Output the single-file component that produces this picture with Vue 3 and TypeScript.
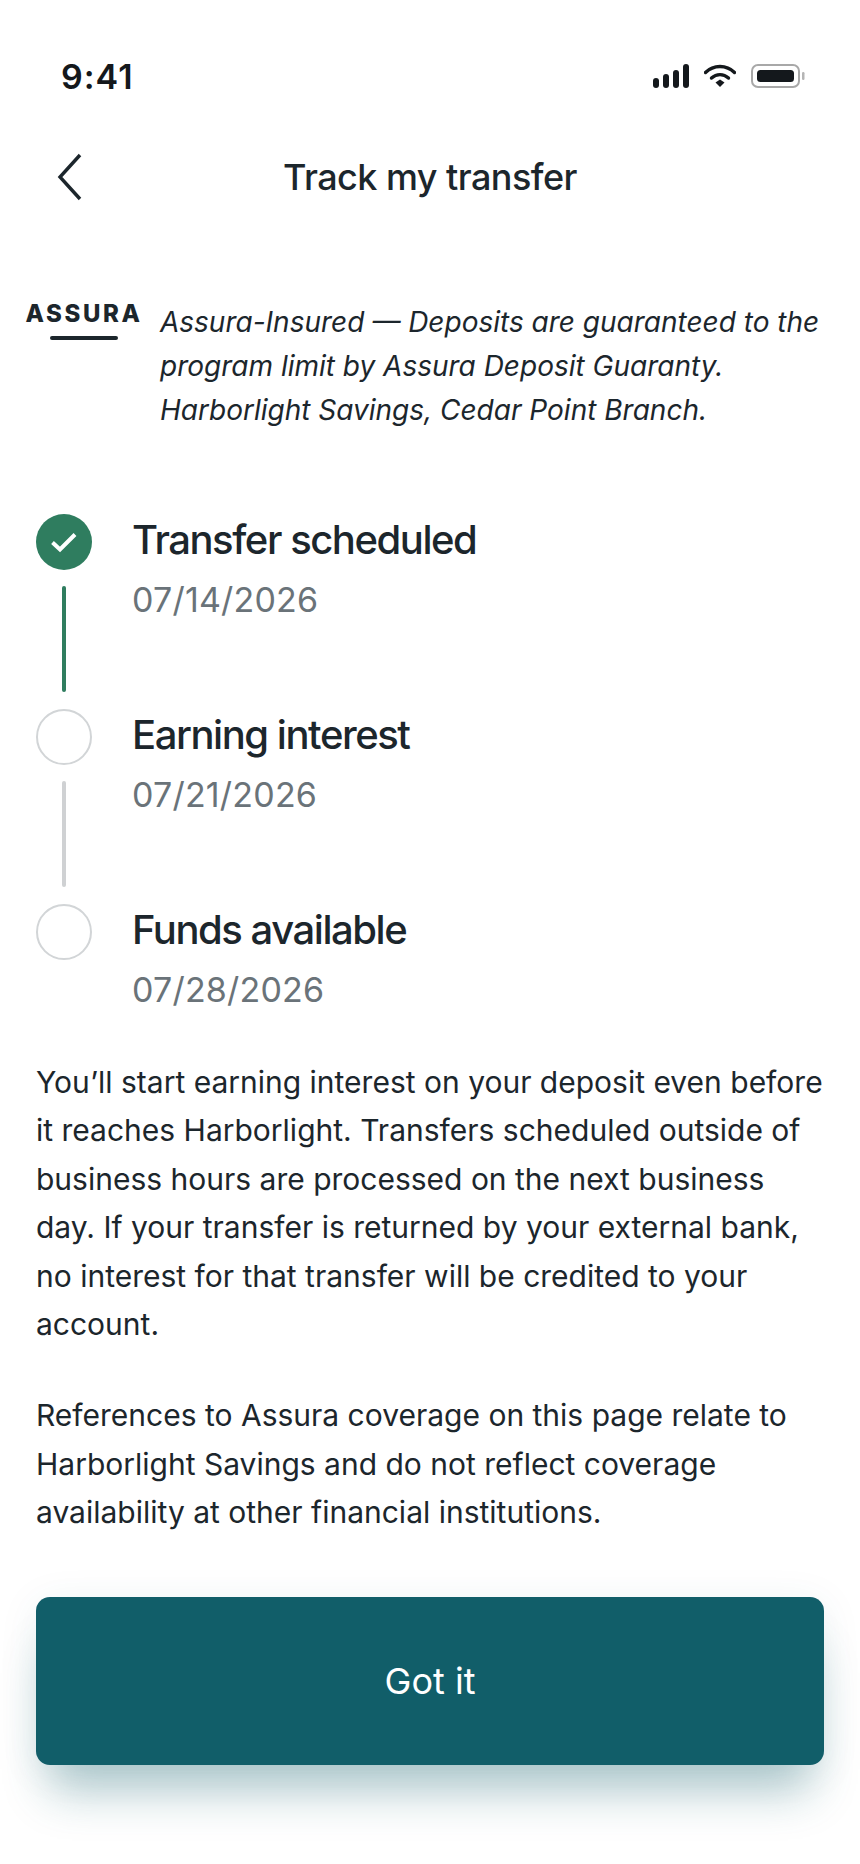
<template>
  <div class="screen">
    <div class="status-bar">
      <span class="time">9:41</span>
      <div class="status-icons">
        <svg width="36" height="24" viewBox="0 0 36 24">
          <rect x="0" y="14" width="6" height="10" rx="3" fill="#14181c" />
          <rect x="10" y="10" width="6" height="14" rx="3" fill="#14181c" />
          <rect x="20" y="6" width="6" height="18" rx="3" fill="#14181c" />
          <rect x="30" y="0" width="6" height="24" rx="3" fill="#14181c" />
        </svg>
        <svg width="32" height="24" viewBox="0 0 32 24" fill="none">
          <path d="M1.5 8.5C9.5 0.5 22.5 0.5 30.5 8.5" stroke="#14181c" stroke-width="3.4" stroke-linecap="round" />
          <path d="M7.5 14C12.5 9.5 19.5 9.5 24.5 14" stroke="#14181c" stroke-width="3.4" stroke-linecap="round" />
          <path d="M11.5 18.5L16 15.5L20.5 18.5L16 23Z" fill="#14181c" />
        </svg>
        <svg width="54" height="24" viewBox="0 0 54 24" fill="none">
          <rect x="1" y="1" width="47" height="22" rx="6" stroke="#a8a8a8" stroke-width="2" />
          <rect x="6" y="6" width="37" height="12" rx="3.5" fill="#14181c" />
          <rect x="51" y="8" width="2.5" height="8" rx="1.2" fill="#b5b5b5" />
        </svg>
      </div>
    </div>

    <header class="nav">
      <svg class="back" width="28" height="48" viewBox="0 0 28 48" fill="none">
        <path d="M24 2L4 24L24 46" stroke="#1c262c" stroke-width="3.4" />
      </svg>
      <h1>Track my transfer</h1>
    </header>

    <section class="insured">
      <div class="logo">
        <span class="logo-name">ASSURA</span>
        <span class="logo-bar"></span>
      </div>
      <p>Assura-Insured — Deposits are guaranteed to the program limit by Assura Deposit Guaranty. Harborlight Savings, Cedar Point Branch.</p>
    </section>

    <ol class="steps">
      <li v-for="(step, index) in steps" :key="step.title" class="step">
        <div class="marker">
          <span class="dot" :class="{ done: step.done }">
            <svg v-if="step.done" width="28" height="22" viewBox="0 0 28 22" fill="none">
              <path d="M2.5 11.5L10 18.5L25 3.5" stroke="#fff" stroke-width="4" />
            </svg>
          </span>
          <span v-if="index < steps.length - 1" class="line" :class="{ done: step.done }"></span>
        </div>
        <div class="step-text">
          <div class="step-title">{{ step.title }}</div>
          <div class="step-date">{{ step.date }}</div>
        </div>
      </li>
    </ol>

    <p class="copy">You’ll start earning interest on your deposit even before it reaches Harborlight. Transfers scheduled outside of business hours are processed on the next business day. If your transfer is returned by your external bank, no interest for that transfer will be credited to your account.</p>
    <p class="copy second">References to Assura coverage on this page relate to Harborlight Savings and do not reflect coverage availability at other financial institutions.</p>

    <button class="got-it" type="button">Got it</button>
  </div>
</template>

<script setup lang="ts">
interface Step {
  title: string;
  date: string;
  done: boolean;
}

const steps: Step[] = [
  { title: 'Transfer scheduled', date: '07/14/2026', done: true },
  { title: 'Earning interest', date: '07/21/2026', done: false },
  { title: 'Funds available', date: '07/28/2026', done: false },
];
</script>

<style scoped>
.screen {
  width: 860px;
  height: 1864px;
  box-sizing: border-box;
  background: #fff;
  font-family: Inter, "Liberation Sans", sans-serif;
  color: #1c262c;
  overflow: hidden;
}

.status-bar {
  height: 64px;
  padding: 44px 55px 0 61px;
  display: flex;
  justify-content: space-between;
  align-items: center;
}

.time {
  font-size: 34px;
  font-weight: 600;
  color: #14181c;
  letter-spacing: 1px;
}

.status-icons {
  display: flex;
  align-items: center;
  gap: 15px;
}

.nav {
  position: relative;
  margin-top: 39px;
  height: 60px;
  display: flex;
  align-items: center;
  justify-content: center;
}

.back {
  position: absolute;
  left: 56px;
  top: 6px;
}

h1 {
  margin: 0;
  font-size: 36px;
  font-weight: 500;
  letter-spacing: -0.55px;
}

.insured {
  margin-top: 93px;
  display: flex;
  padding: 0 36px 0 27px;
}

.logo {
  width: 114px;
  flex: none;
  margin-right: 19px;
  display: flex;
  flex-direction: column;
  align-items: center;
}

.logo-name {
  font-size: 24px;
  font-weight: 800;
  letter-spacing: 2.6px;
  line-height: 28px;
}

.logo-bar {
  width: 68px;
  height: 4px;
  border-radius: 2px;
  margin-top: 8px;
  background: #1c262c;
}

.insured p {
  margin: 0;
  font-size: 28px;
  line-height: 44px;
  font-style: italic;
}

.steps {
  list-style: none;
  margin: 82px 0 0;
  padding: 0 36px;
}

.step {
  display: flex;
  height: 195px;
}

.step:last-child {
  height: 154px;
}

.marker {
  width: 56px;
  margin-right: 40px;
  display: flex;
  flex-direction: column;
  align-items: center;
}

.dot {
  width: 56px;
  height: 56px;
  box-sizing: border-box;
  border-radius: 50%;
  border: 2px solid #d2d5d7;
  display: flex;
  align-items: center;
  justify-content: center;
  flex: none;
}

.dot.done {
  background: #2f7d5f;
  border: none;
}

.line {
  width: 4px;
  height: 106px;
  margin-top: 16px;
  border-radius: 2px;
  background: #cfd1d3;
}

.line.done {
  background: #2f7d5f;
}

.step-title {
  font-size: 40px;
  font-weight: 500;
  line-height: 52px;
  letter-spacing: -1.45px;
}

.step-date {
  margin-top: 8px;
  font-size: 34px;
  line-height: 52px;
  letter-spacing: 0.2px;
  color: #6a7379;
}

.copy {
  margin: 0;
  padding: 0 36px;
  font-size: 30px;
  line-height: 48.4px;
}

.second {
  margin-top: 43px;
}

.got-it {
  display: block;
  width: 788px;
  height: 168px;
  margin: 60px 36px 0;
  border: none;
  border-radius: 14px;
  background: #115e69;
  color: #fff;
  font-family: inherit;
  font-size: 36px;
  box-shadow: 0 40px 44px -14px rgba(17, 94, 105, 0.32), 0 6px 40px rgba(17, 94, 105, 0.08);
}
</style>
